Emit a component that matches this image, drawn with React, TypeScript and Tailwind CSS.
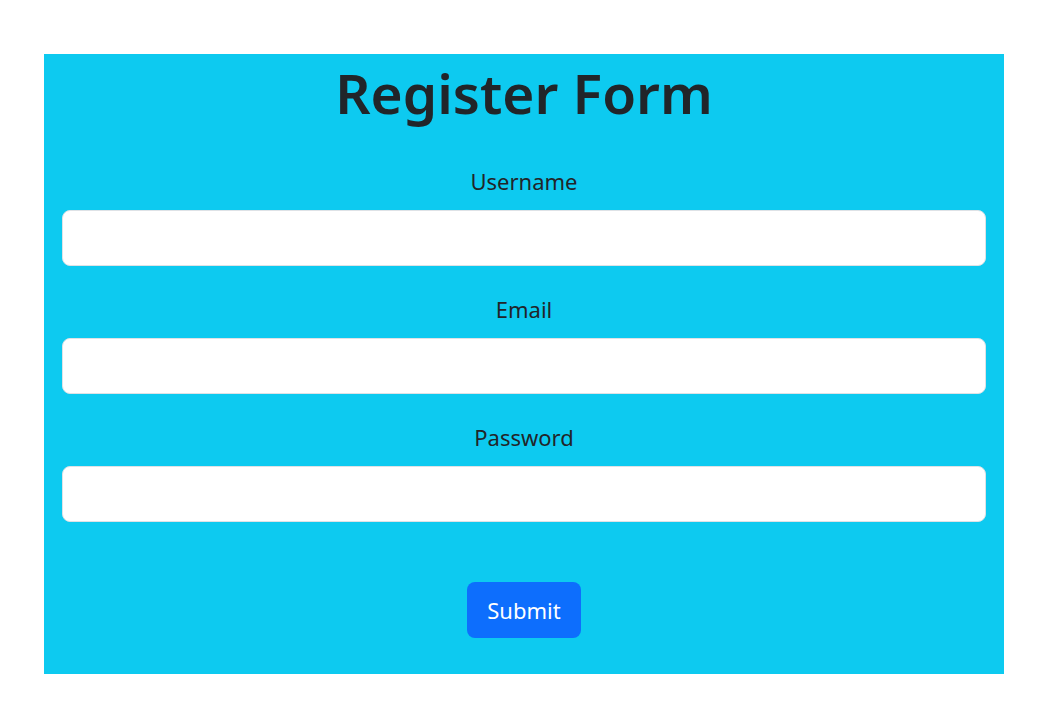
export default function App() {
  const fields = ["Username", "Email", "Password"];
  return (
    <div className="min-h-screen bg-white pt-[54px] font-['Noto_Sans',sans-serif] text-[#212529]">
      <form className="ml-[44px] w-[960px] bg-[#0dcaf0] px-[18px] pb-[36px] pt-[3px]">
        <h1 className="text-center text-[55px] font-semibold leading-[72px]">Register Form</h1>

        <div className="mt-[37px]">
          {fields.map((f) => (
            <div key={f} className="mb-[28px]">
              <label className="mb-[14px] block text-center text-[22px] leading-[30px]">{f}</label>
              <input
                type={f === "Password" ? "password" : f === "Email" ? "email" : "text"}
                className="block h-[56px] w-full rounded-[8px] border border-[#dee2e6] bg-white px-4 outline-none"
              />
            </div>
          ))}
        </div>

        <div className="mt-[60px] flex justify-center">
          <button
            type="button"
            className="h-[56px] w-[114px] rounded-[8px] bg-[#0d6efd] text-[22px] text-white"
          >
            Submit
          </button>
        </div>
      </form>
    </div>
  );
}
